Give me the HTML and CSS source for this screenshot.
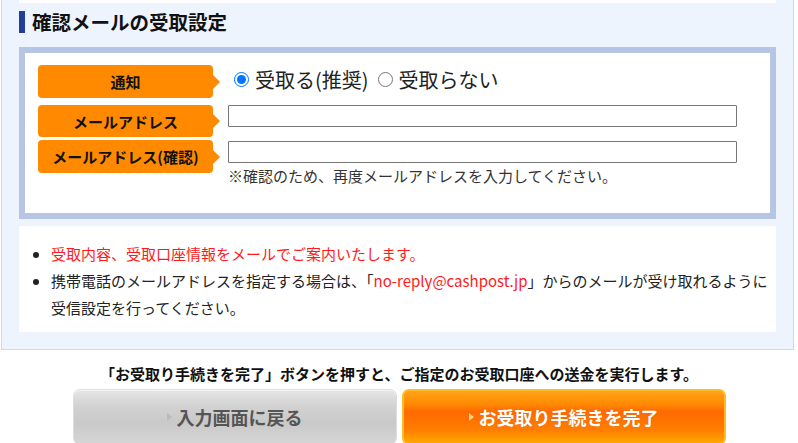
FILE: index.html
```html
<!DOCTYPE html>
<html lang="ja">

<head>
    <meta charset="UTF-8">
    <meta name="viewport" content="width=device-width, initial-scale=1.0">
    <title>確認メールの受取設定</title>
    <link rel="stylesheet" href="styles.css">
</head>

<body>
    <!-- Mail settings panel -->
    <div class="panel">
        <div class="prevEnd"></div>
        <h2 class="sectionTitle">確認メールの受取設定</h2>

        <div class="formBox">
            <div class="formRow rowNotice">
                <div class="label">通知</div>
                <div class="field radios">
                    <label class="radio"><input type="radio" name="notice" checked>受取る(推奨)</label>
                    <label class="radio"><input type="radio" name="notice">受取らない</label>
                </div>
            </div>
            <div class="formRow rowMail">
                <div class="label">メールアドレス</div>
                <div class="field">
                    <input class="textInput" type="text">
                </div>
            </div>
            <div class="formRow rowConfirm">
                <div class="label">メールアドレス(確認)</div>
                <div class="field">
                    <input class="textInput" type="text">
                    <p class="note">※確認のため、再度メールアドレスを入力してください。</p>
                </div>
            </div>
        </div>

        <div class="infoBox">
            <ul>
                <li><span class="red">受取内容、受取口座情報をメールでご案内いたします。</span></li>
                <li>携帯電話のメールアドレスを指定する場合は、「<span class="red">no-reply@cashpost.jp</span>」からのメールが受け取れるように受信設定を行ってください。</li>
            </ul>
        </div>
    </div>

    <p class="confirmText">「お受取り手続きを完了」ボタンを押すと、ご指定のお受取口座への送金を実行します。</p>

    <div class="buttons">
        <button class="btn btnBack"><span class="tri"></span>入力画面に戻る</button>
        <button class="btn btnDone"><span class="tri"></span>お受取り手続きを完了</button>
    </div>
</body>

</html>
```

FILE: styles.css
```css
body {
    margin: 0;
    width: 798px;
    font-family: "Noto Sans CJK JP", "Noto Sans", sans-serif;
    color: #222;
    background: #fff;
}

/* Outer light blue panel */
.panel {
    box-sizing: border-box;
    width: 793px;
    margin-left: 1px;
    padding: 0 17px 17px;
    background-color: #eef4fe;
    border: 1px solid #cdd8f0;
    border-top: none;
}

.prevEnd {
    height: 3px;
    background-color: #fff;
}

.sectionTitle {
    margin: 8px 0 0;
    padding-left: 7px;
    border-left: 6px solid #213f98;
    font-size: 19.5px;
    line-height: 22px;
    font-weight: bold;
    color: #111;
}

/* Form box */
.formBox {
    margin-top: 14px;
    padding: 12px 13px 26px;
    background-color: #fff;
    border: 6px solid #b7c5e4;
}

.formRow {
    display: flex;
}

.rowNotice {
    height: 33px;
    margin-bottom: 7px;
    align-items: center;
}

.rowMail {
    margin-bottom: 3px;
}

.label {
    position: relative;
    flex: none;
    width: 175px;
    height: 33px;
    display: flex;
    align-items: center;
    justify-content: center;
    background-color: #ff8a00;
    border-radius: 4px;
    font-size: 15px;
    font-weight: bold;
    color: #111;
}

.rowMail .label {
    height: 32px;
}

/* Arrow pointing to the field */
.label::after {
    content: "";
    position: absolute;
    right: -7px;
    top: 50%;
    margin-top: -7px;
    border-left: 7px solid #ff8a00;
    border-top: 7px solid transparent;
    border-bottom: 7px solid transparent;
}

.field {
    margin-left: 15px;
}

.radios {
    display: flex;
    align-items: center;
    margin-bottom: 4px;
    font-size: 20px;
    color: #222;
}

.radio {
    display: flex;
    align-items: center;
    margin-right: 3px;
}

.radio input {
    width: 15px;
    height: 15px;
    margin: 0 6px 0 6px;
}

.textInput {
    display: block;
    box-sizing: border-box;
    width: 509px;
    height: 22px;
    padding: 0 4px;
    border: 1px solid #767676;
    border-radius: 1px;
}

.rowConfirm .textInput {
    margin-top: 1px;
}

.note {
    margin: 2px 0 0;
    font-size: 15px;
    line-height: 22px;
    color: #333;
}

/* Information box */
.infoBox {
    margin-top: 7px;
    padding: 14px 0 11px;
    background-color: #fff;
}

.infoBox ul {
    margin: 0;
    padding: 0 2px 0 32px;
}

.infoBox li {
    font-size: 15px;
    line-height: 27px;
    color: #222;
}

.red {
    color: #ff1a1a;
}

/* Bottom */
.confirmText {
    margin: 13px 0 4px;
    text-align: center;
    font-size: 15px;
    line-height: 22px;
    font-weight: bold;
    color: #111;
}

.buttons {
    display: flex;
    justify-content: center;
    gap: 5px;
}

.btn {
    width: 324px;
    height: 56px;
    display: flex;
    align-items: center;
    justify-content: center;
    border-radius: 7px;
    font-family: inherit;
    font-size: 18px;
    font-weight: bold;
    cursor: pointer;
}

.btnBack {
    color: #555;
    border: 1px solid #dedede;
    background: linear-gradient(#e6e6e6 0%, #d2d2d2 30%, #c9c9c9 60%, #d6d6d6 100%);
    box-shadow: inset 0 1px 0 #f4f4f4;
}

.btnDone {
    color: #fff;
    border: 2px solid #ffbb22;
    background: linear-gradient(#ffa31a 0%, #ff8a00 25%, #ff6a00 40%, #ff7e00 75%, #ffa800 100%);
    text-shadow: 0 0 1px rgba(150, 60, 0, 0.4);
}

.tri {
    display: inline-block;
    margin-right: 5px;
    border-left: 5px solid #bbb;
    border-top: 4px solid transparent;
    border-bottom: 4px solid transparent;
}

.btnDone .tri {
    border-left-color: #ffd38a;
}
```
